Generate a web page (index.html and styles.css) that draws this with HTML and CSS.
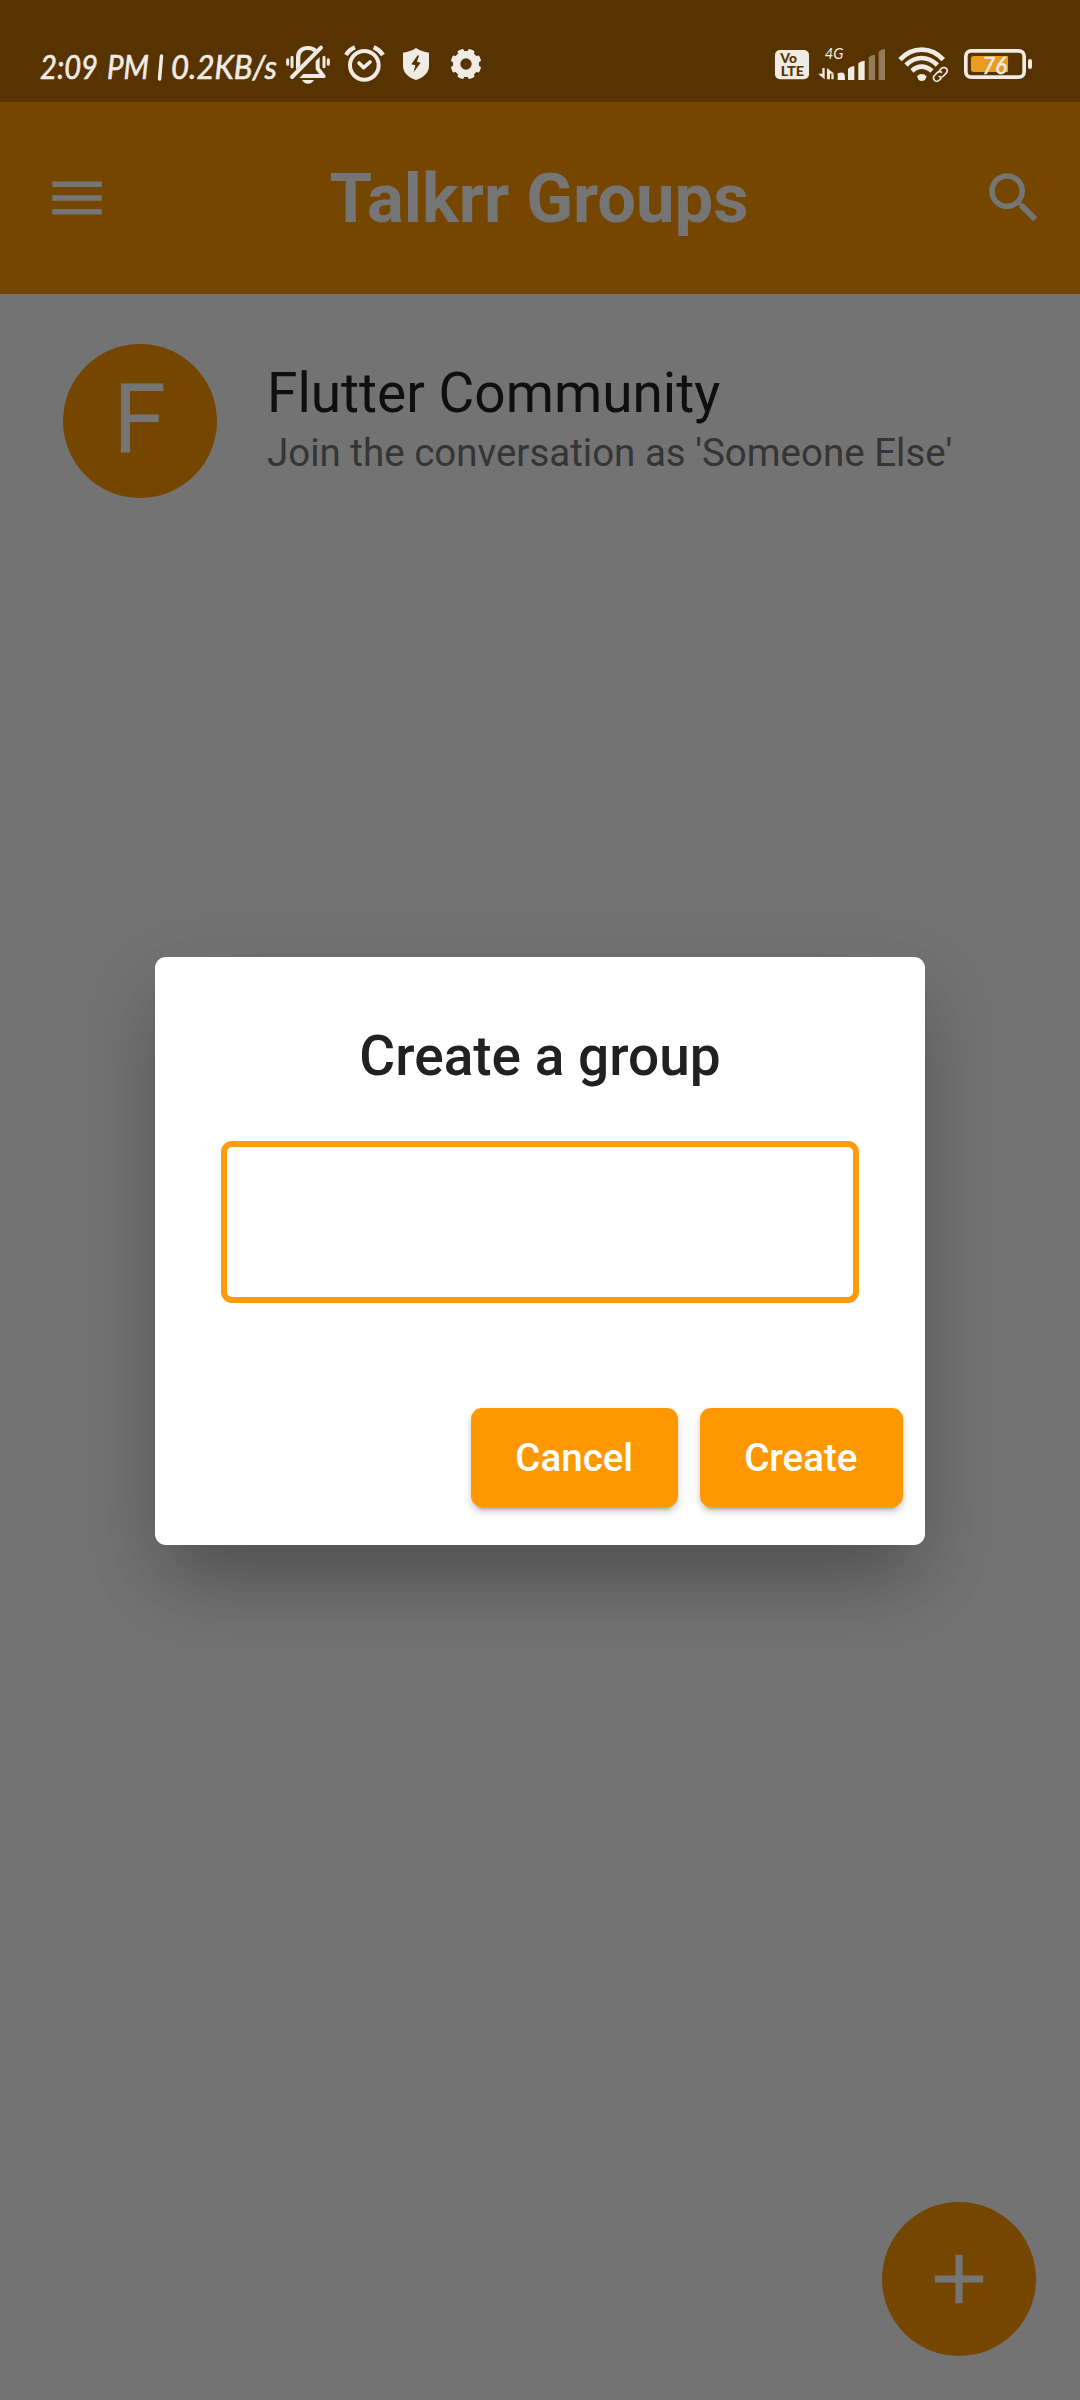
FILE: index.html
```html
<!DOCTYPE html>
<html lang="en">
<head>
<meta charset="utf-8">
<title>Talkrr Groups</title>
<link rel="stylesheet" href="styles.css">
</head>
<body>
<div class="screen">
  <header class="app-bar">
    <svg class="icon" viewBox="0 0 24 24"><path d="M3 18h18v-2H3v2zm0-5h18v-2H3v2zm0-7v2h18V6H3z"/></svg>
    <h1 class="app-title">Talkrr Groups</h1>
    <svg class="icon" viewBox="0 0 24 24"><path d="M15.5 14h-.79l-.28-.27C15.41 12.59 16 11.11 16 9.5 16 5.91 13.09 3 9.5 3S3 5.91 3 9.5 5.91 16 9.5 16c1.61 0 3.09-.59 4.23-1.57l.27.28v.79l5 4.99L20.49 19l-4.99-5zm-6 0C7.01 14 5 11.99 5 9.5S7.01 5 9.5 5 14 7.01 14 9.5 11.99 14 9.5 14z"/></svg>
  </header>
  <main class="groups">
    <div class="group">
      <div class="avatar">F</div>
      <div class="group-text">
        <div class="group-name">Flutter Community</div>
        <div class="group-sub">Join the conversation as 'Someone Else'</div>
      </div>
    </div>
  </main>
  <button class="fab"><svg class="icon" viewBox="0 0 24 24"><path d="M20.8 13.3h-7.5v7.5h-2.6v-7.5H3.2v-2.6h7.5V3.2h2.6v7.5h7.5z"/></svg></button>
</div>

<div class="barrier">
  <section class="dialog">
    <h2 class="dialog-title">Create a group</h2>
    <input class="field" type="text" aria-label="Group name">
    <div class="actions">
      <button class="btn btn-cancel">Cancel</button>
      <button class="btn btn-create">Create</button>
    </div>
  </section>
</div>

<div class="status-bar">
  <svg class="clock" viewBox="40 43 240 42">
    <text x="40" y="79" textLength="58" lengthAdjust="spacingAndGlyphs">2:09</text>
    <text x="107" y="79" textLength="42" lengthAdjust="spacingAndGlyphs">PM</text>
    <path class="line" d="M161.500 56L159.500 79"/>
    <text x="171" y="79" textLength="106" lengthAdjust="spacingAndGlyphs">0.2KB/s</text>
  </svg>
  <svg class="bell" viewBox="45 69 138 126">
    <path class="line w9" d="M53 119v14M66 112v28M162 112v28M175 119v14"/>
    <path d="M78 150V112C78 90 92 78 114 78C126 78 135 82 141 88L131 97C127 92 121 90 114 90C100 90 91 98 91 113V137Z"/>
    <path d="M149 111V143L166 166V174H88L100 162H148L137 148V123Z"/>
    <path class="line w12" d="M66 171L153 83"/>
    <path d="M96 180H132C128 187 122 191 114 191S100 187 96 180Z"/>
  </svg>
  <svg class="alarm" viewBox="219 69 129 126">
    <circle class="line w12" cx="283" cy="136" r="43"/>
    <path class="line w11" d="M267 129L281 143L300 126"/>
    <path class="line w13 butt" d="M228 105Q237 90 255 82M311 82Q329 90 339 105"/>
  </svg>
  <svg class="shield" viewBox="396 69 84 126">
    <path d="M438 84C449 92 463 96 477 98V137C477 158 461 172 438 180C415 172 399 158 399 137V98C413 96 427 92 438 84Z"/>
    <path class="cut" d="M443 106L424 133L436 136L431 157L452 128L441 125L447 107Z"/>
  </svg>
  <svg class="gear" viewBox="540 69 96 126">
    <circle class="ring" cx="588" cy="132" r="28"/>
    <g>
      <rect x="578" y="86" width="20" height="20" rx="5" transform="rotate(22.500 588 132)"/>
      <rect x="578" y="86" width="20" height="20" rx="5" transform="rotate(-22.500 588 132)"/>
      <rect x="578" y="86" width="20" height="20" rx="5" transform="rotate(67.500 588 132)"/>
      <rect x="578" y="86" width="20" height="20" rx="5" transform="rotate(112.500 588 132)"/>
      <rect x="578" y="86" width="20" height="20" rx="5" transform="rotate(157.500 588 132)"/>
      <rect x="578" y="86" width="20" height="20" rx="5" transform="rotate(202.500 588 132)"/>
      <rect x="578" y="86" width="20" height="20" rx="5" transform="rotate(247.500 588 132)"/>
      <rect x="578" y="86" width="20" height="20" rx="5" transform="rotate(292.500 588 132)"/>
    </g>
  </svg>
  <svg class="volte" viewBox="75 69 102 126">
    <rect x="75" y="90" width="102" height="88" rx="15"/>
    <text class="volte-text" x="91" y="129" textLength="50" lengthAdjust="spacingAndGlyphs">Vo</text>
    <text class="volte-text" x="92" y="168" textLength="70" lengthAdjust="spacingAndGlyphs">LTE</text>
  </svg>
  <svg class="signal" viewBox="204 69 204 126">
    <text class="net" x="224" y="116" textLength="56" lengthAdjust="spacingAndGlyphs">4G</text>
    <path d="M217 144H224V178L204 161H217ZM231 178V144L253 161H240V178ZM244 163H251V178H244Z"/>
    <path d="M263 160Q274 156 281 159Q285 161 285 180H263ZM294 146Q302 138 313 138V180H294ZM325 130Q332 122 344 122V180H325Z"/>
    <path class="dim" d="M356 112Q363 104 375 104V180H356ZM386 95Q393 87 405 87V180H386Z"/>
  </svg>
  <svg class="wifi" viewBox="444 69 156 126">
    <path class="line w14 butt" d="M450 119Q478 89 515 89Q552 89 580 119M468 135Q490 114 515 114Q540 114 562 135M486 153Q499 140 515 140Q531 140 546 153"/>
    <path d="M515 162Q523 162 530 169L525 180Q515 186 506 180L501 169Q507 162 515 162Z"/>
    <g class="link" transform="rotate(-45 571 163)"><path d="M566 173H556A10 10 0 0 1 556 153H568A10 10 0 0 1 578 163M576 153H586A10 10 0 0 1 586 173H574A10 10 0 0 1 564 163"/></g>
  </svg>
  <svg class="battery" viewBox="639 69 210 126">
    <rect class="line w11" x="647.500" y="92.500" width="175" height="79" rx="16"/>
    <path class="charge" d="M671 108H774V156H671Q663 156 663 148V116Q663 108 671 108Z"/>
    <rect x="834" y="117" width="12" height="30" rx="6"/>
    <text class="percent" x="697" y="161" textLength="74" lengthAdjust="spacingAndGlyphs">76</text>
  </svg>
</div>
</body>
</html>
```
FILE: styles.css
```css
* { box-sizing: border-box; }
body { margin: 0; font-family: Roboto, sans-serif; position: relative; width: 1080px; height: 2400px; overflow: hidden; }
h1, h2 { margin: 0; }
button { border: 0; padding: 0; font-family: inherit; }

.screen { height: 2400px; background: #fafafa; display: flex; flex-direction: column; }
.app-bar { height: 294px; padding: 102px 33px 0 44px; background: #ff9800; display: flex; align-items: center; justify-content: space-between; flex: none; }
.icon { width: 66px; height: 66px; fill: #fff; flex: none; display: block; }
.app-title { color: #fff; font-size: 68.75px; font-weight: 700; line-height: 80px; margin-right: 13px; padding-top: 2px; }
.groups { flex: 1; padding: 50px 0 0 63px; }
.group { display: flex; align-items: center; gap: 50px; }
.avatar { width: 154px; height: 154px; border-radius: 50%; background: #ff9800; color: #fff; font-size: 96.25px; line-height: 151px; text-indent: -1px; text-align: center; }
.group-name { color: #212121; font-size: 55px; line-height: 62px; }
.group-sub { color: #737373; font-size: 38.5px; line-height: 57px; }
.fab { align-self: flex-end; margin: 0 44px 44px 0; width: 154px; height: 154px; border-radius: 50%; background: #ff9800; display: flex; align-items: center; justify-content: center; }

.barrier { position: absolute; inset: 0; background: rgba(0, 0, 0, .54); display: flex; align-items: center; justify-content: center; padding-top: 102px; }
.dialog { width: 770px; height: 588px; border-radius: 11px; background: #fff; padding: 66px 22px 38.500px 66px; display: flex; flex-direction: column; box-shadow: 0 44px 72px -14px rgba(0, 0, 0, .23), 0 26px 84px -2px rgba(0, 0, 0, .12); }
.dialog-title { font-size: 55px; font-weight: 500; line-height: 66px; color: #212121; text-align: center; margin-right: 44px; }
.field { width: 638px; height: 162px; margin-top: 52px; border: 6px solid #fd9b0c; border-radius: 11px; background: transparent; outline: none; }
.actions { margin-top: auto; display: flex; justify-content: flex-end; gap: 22px; }
.btn { height: 99px; border-radius: 11px; background: #ff9800; color: #fff; font-size: 38.5px; font-weight: 500; box-shadow: 0 8px 3px -6px rgba(0, 0, 0, .2), 0 5px 6px rgba(0, 0, 0, .14), 0 3px 10px rgba(0, 0, 0, .08); }
.btn-cancel { width: 206.500px; }
.btn-create { width: 203.500px; padding-right: 1px; }

.status-bar { position: absolute; top: 0; left: 0; width: 1080px; height: 102px; padding: 43px 47px 0 40px; background: #573300; display: flex; align-items: flex-start; }
.status-bar svg { height: 42px; flex: none; display: block; overflow: visible; fill: #f0ebe4; }
.status-bar .line { fill: none; stroke: #f0ebe4; stroke-width: 3.500; stroke-linecap: round; stroke-linejoin: round; }
.status-bar .w9 { stroke-width: 9; }
.status-bar .w11 { stroke-width: 11; }
.status-bar .w12 { stroke-width: 12; }
.status-bar .w13 { stroke-width: 13; }
.status-bar .w14 { stroke-width: 14; }
.status-bar .butt { stroke-linecap: butt; }
.clock { width: 240px; font: italic 400 33px Lato, sans-serif; stroke: #f0ebe4; stroke-width: .6; }
.bell { width: 46px; margin-left: 5px; }
.alarm { width: 43px; margin-left: 12px; }
.shield { width: 28px; margin-left: 16px; }
.cut { fill: #573300; }
.gear { width: 32px; margin-left: 20px; }
.ring { fill: none; stroke: #f0ebe4; stroke-width: 22; }
.volte { width: 34px; margin-left: auto; }
.volte-text { font: 900 37px Lato, sans-serif; fill: #573300; }
.signal { width: 68px; margin-left: 9px; }
.net { font: italic 400 46px Lato, sans-serif; }
.dim { fill: #937b5c; }
.wifi { width: 52px; margin-left: 12px; }
.link { fill: none; stroke: #f0ebe4; stroke-width: 5; }
.battery { width: 70px; margin-left: 13px; }
.charge { fill: #e99c20; }
.percent { font: italic 400 67px Lato, sans-serif; stroke: #f0ebe4; stroke-width: 1.500; }
```
